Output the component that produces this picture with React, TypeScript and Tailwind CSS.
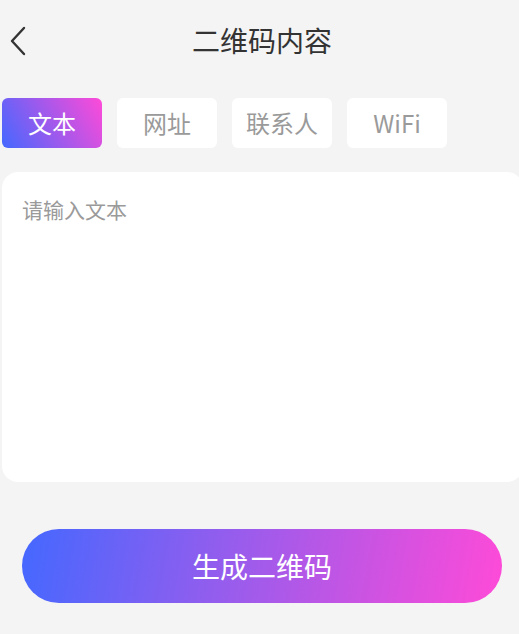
import { useState } from 'react';

const TABS = ['文本', '网址', '联系人', 'WiFi'];

export default function App() {
  const [active, setActive] = useState(0);

  return (
    <div
      className="min-h-[634px] w-[519px] overflow-hidden bg-[#f4f4f4]"
      style={{ fontFamily: '"Noto Sans CJK SC", "Noto Sans", sans-serif' }}
    >
      {/* Header */}
      <div className="relative flex h-[80px] items-center justify-center">
        <button className="absolute left-[6px] top-[23px] p-0.5">
          <svg width="20" height="32" viewBox="0 0 20 32" fill="none">
            <path d="M16 3 L4 16 L16 29" stroke="#333" strokeWidth="2.4" strokeLinecap="round" strokeLinejoin="round" />
          </svg>
        </button>
        <h1 className="pl-[5px] text-[28px] leading-none text-[#333]">二维码内容</h1>
      </div>

      {/* Tabs */}
      <div className="mt-[18px] flex gap-[15px] pl-[2px]">
        {TABS.map((t, i) => (
          <button
            key={t}
            onClick={() => setActive(i)}
            className={
              i === active
                ? 'flex h-[50px] w-[100px] items-center justify-center rounded-[6px] bg-[linear-gradient(60deg,#4468ff,#ff4ad8)] text-[24px] text-white'
                : 'flex h-[50px] w-[100px] items-center justify-center rounded-[6px] bg-white text-[24px] text-[#9a9a9a]'
            }
          >
            {t}
          </button>
        ))}
      </div>

      {/* Input */}
      <div className="ml-[2px] mt-[24px] h-[310px] w-[521px] rounded-[16px] bg-white px-[20px] pt-[22px]">
        <textarea
          placeholder="请输入文本"
          className="h-full w-full resize-none bg-transparent text-[21px] leading-[30px] text-[#333] outline-none placeholder:text-[#9a9a9a]"
        />
      </div>

      {/* Generate button */}
      <div className="mt-[47px] px-[22px]">
        <button className="flex h-[74px] w-[480px] items-center justify-center rounded-full bg-[linear-gradient(100deg,#4468ff,#9a5cec_45%,#ff4ad8)] text-[28px] text-white">
          生成二维码
        </button>
      </div>
    </div>
  );
}
